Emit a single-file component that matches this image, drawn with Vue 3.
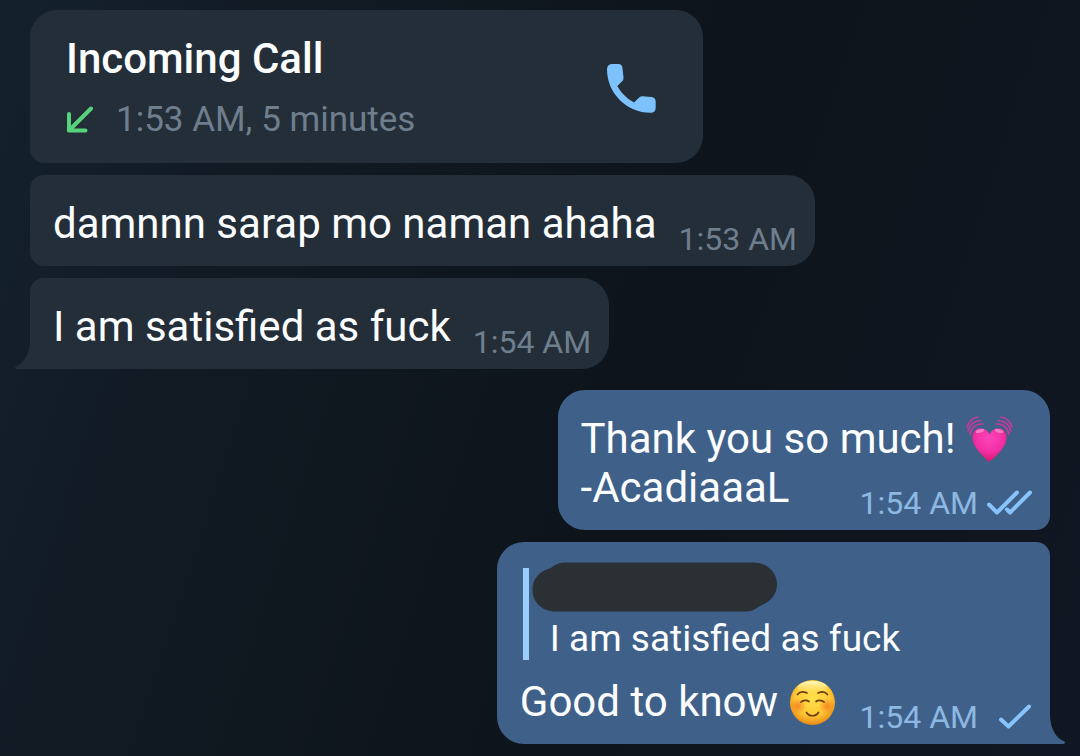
<script setup>
import { ref } from 'vue'

const call = ref({ title: 'Incoming Call', detail: '1:53 AM, 5 minutes' })
const incoming = ref([
  { text: 'damnnn sarap mo naman ahaha', time: '1:53 AM', last: false },
  { text: 'I am satisfied as fuck', time: '1:54 AM', last: true },
])
</script>

<template>
  <main class="chat">
    <article class="bubble in call">
      <div>
        <h2 class="call-title">{{ call.title }}</h2>
        <p class="call-detail">
          <svg class="arrow" viewBox="0 0 28 28" aria-hidden="true">
            <path d="M25 2.500 L3 24.500 M3 8V24.500H19.500" />
          </svg>
          <span>{{ call.detail }}</span>
        </p>
      </div>
      <button class="call-button" type="button" aria-label="Call back">
        <svg class="phone" viewBox="0 0 49 49" aria-hidden="true">
          <path d="M5.500 0 H11.500 Q15 0 15.400 3.500 L16.500 13.500 Q16.700 15.700 15.200 17.200 L10.300 22 C14.300 29 19.500 34.300 27 38.500 L32.200 33.400 Q33.700 32 35.800 32.200 L44.500 33 Q48.700 33.500 48.700 37.500 V43.500 Q48.700 48.800 43.500 48.800 C19.500 48.800 0 29 0 5.500 Q0 0 5.500 0Z" />
        </svg>
      </button>
    </article>

    <article
      v-for="message in incoming"
      :key="message.text"
      class="bubble in message"
      :class="{ last: message.last }"
    >
      <p class="text">{{ message.text }}</p>
      <div class="meta"><time>{{ message.time }}</time></div>
      <svg v-if="message.last" class="tail tail-left" viewBox="0 0 15 28" aria-hidden="true">
        <path d="M15 0 V28 H1 Q-1 26 1 25.200 C9 22 14.500 13 15 0Z" />
      </svg>
    </article>

    <article class="bubble out message stacked">
      <p class="text">
        Thank you so much!
        <svg class="emoji" viewBox="0 0 47 47" role="img" aria-label="beating heart">
          <defs>
            <radialGradient id="heart" cx="0.5" cy="0.3" r="0.8">
              <stop offset="0" stop-color="#fb45b8" />
              <stop offset="0.5" stop-color="#f32fa6" />
              <stop offset="1" stop-color="#d30b55" />
            </radialGradient>
          </defs>
          <path fill="url(#heart)" d="M23.500 46 C20 42.500 6.500 32 6.500 22 C6.500 15 10 12.500 14.500 12.500 C19 12.500 22 14.500 23.500 18.500 C25 14.500 28 12.500 32.500 12.500 C37 12.500 40.500 15 40.500 22 C40.500 32 27 42.500 23.500 46Z" />
          <ellipse cx="14" cy="15" rx="4.500" ry="1.700" fill="#ffadd9" opacity="0.6" transform="rotate(-15 14 15)" />
          <ellipse cx="33" cy="15" rx="4.500" ry="1.700" fill="#ffadd9" opacity="0.6" transform="rotate(15 33 15)" />
          <g fill="none" stroke="#c43a9c" stroke-width="1.700" stroke-linecap="round">
            <path d="M1 11 C3 5 7 1.500 12 1 M2 15 C3.500 9 8 5 14.500 4.500 M4 18.500 C5 12 9 8 16.500 8" />
            <path d="M46 11 C44 5 40 1.500 35 1 M45 15 C43.500 9 39 5 32.500 4.500 M43 18.500 C42 12 38 8 30.500 8" />
          </g>
        </svg><br />-AcadiaaaL
      </p>
      <div class="meta">
        <time>1:54 AM</time>
        <svg class="checks" viewBox="0 0 46 26" role="img" aria-label="Read">
          <path d="M3 14.500 L11 22.500 L31 2.500 M21 19.500 L24 22.500 L44 2.500" />
        </svg>
      </div>
    </article>

    <article class="bubble out message last">
      <blockquote class="quote">
        <svg class="redacted" viewBox="0 0 246 50" role="img" aria-label="Hidden name">
          <path d="M33 0.500 H221 C235 0.500 245 10 245 22 C245 33 238 40 229 43.500 C225 45 223 49.500 213 49.500 H23 C10 49.500 0.500 40 0.500 27.500 C0.500 17 7 10 16 7 C22 5 24 0.500 33 0.500Z" />
        </svg>
        <p>I am satisfied as fuck</p>
      </blockquote>
      <p class="text">
        Good to know
        <svg class="emoji" viewBox="0 0 47 47" role="img" aria-label="smiling face">
          <defs>
            <radialGradient id="face" cx="0.5" cy="0.4" r="0.6">
              <stop offset="0" stop-color="#ffe14d" />
              <stop offset="0.65" stop-color="#fdc935" />
              <stop offset="1" stop-color="#e98a15" />
            </radialGradient>
            <radialGradient id="cheek">
              <stop offset="0" stop-color="#f5691d" stop-opacity="0.7" />
              <stop offset="1" stop-color="#f5691d" stop-opacity="0" />
            </radialGradient>
            <linearGradient id="shine" x2="0" y2="1">
              <stop offset="0" stop-color="#fffbc5" />
              <stop offset="1" stop-color="#ffe76a" stop-opacity="0" />
            </linearGradient>
          </defs>
          <circle cx="23.500" cy="23.500" r="22.500" fill="url(#face)" />
          <ellipse cx="23.500" cy="9" rx="15" ry="7" fill="url(#shine)" />
          <circle cx="9" cy="27" r="8" fill="url(#cheek)" />
          <circle cx="38" cy="27" r="8" fill="url(#cheek)" />
          <g fill="none" stroke="#713b12" stroke-width="1.700" stroke-linecap="round">
            <path d="M8.500 15.500 C10.500 13 14.500 12.500 18 14 M29 14 C32.500 12.500 36.500 13 38.500 15.500" />
            <path d="M12 23 C14 20.800 18 20.800 20 22.500 M27 22.500 C29 20.800 33 20.800 35 23" />
            <path d="M17.500 33.500 C20 37.800 27 37.800 29.500 33.500" />
          </g>
        </svg>
      </p>
      <div class="meta">
        <time>1:54 AM</time>
        <svg class="checks" viewBox="0 0 46 26" role="img" aria-label="Sent">
          <path d="M15 15.500 L22.500 22.500 L43 2.500" />
        </svg>
      </div>
      <svg class="tail tail-right" viewBox="0 0 15 28" aria-hidden="true">
        <path d="M0 0 V28 H14 Q16 26 14 25.200 C6 22 0.500 13 0 0Z" />
      </svg>
    </article>
  </main>
</template>

<style>
html {
  min-height: 100%;
  background: linear-gradient(108deg, #14212c 0%, #111922 25%, #0d141b 58%, #111722 100%);
}
</style>

<style scoped>
.chat {
  display: flex;
  flex-direction: column;
  align-items: flex-start;
  gap: 12px;
  padding: 10px 30px 12px;
  font-family: Roboto, "Noto Sans", sans-serif;
  font-size: 42px;
  line-height: 49px;
  color: #fbfdff;
}

h2,
p,
blockquote {
  margin: 0;
}

.bubble {
  position: relative;
  box-sizing: border-box;
}

.in {
  background: #232e39;
  border-radius: 14px 27px 27px 14px;
  --meta: #6f7e8d;
  --fill: #232e39;
}

.out {
  align-self: flex-end;
  background: #3f6189;
  border-radius: 27px 27px 14px 27px;
  --meta: #8db8e2;
  --fill: #3f6189;
}

.call {
  display: flex;
  align-items: center;
  justify-content: space-between;
  width: 66%;
  padding: 24px 47px 23px 36px;
  border-top-left-radius: 27px;
}

.call-title {
  font-size: 42px;
  font-weight: 500;
}

.call-detail {
  display: flex;
  align-items: center;
  gap: 22px;
  margin-top: 16px;
  font-size: 35px;
  line-height: 41px;
  color: #6f7e8d;
}

.arrow {
  width: 28px;
  height: 28px;
  fill: none;
  stroke: #56d37b;
  stroke-width: 4;
  stroke-linecap: round;
  stroke-linejoin: round;
}

.call-button {
  display: flex;
  padding: 2px 0 0;
  border: 0;
  background: none;
  cursor: pointer;
}

.phone {
  width: 49px;
  height: 49px;
  fill: #7dc2fc;
}

.message {
  display: grid;
  grid-template-columns: auto auto;
  column-gap: 22px;
  padding: 24px 18px 8px 23px;
}

.text {
  padding-bottom: 10px;
}

.meta {
  display: flex;
  align-items: center;
  align-self: end;
  justify-self: end;
  gap: 8px;
  font-size: 32px;
  line-height: 38px;
  color: var(--meta);
}

.checks {
  width: 46px;
  height: 26px;
  fill: none;
  stroke: #87c3fd;
  stroke-width: 4;
  stroke-linecap: round;
  stroke-linejoin: round;
}

.emoji {
  width: 47px;
  height: 47px;
  vertical-align: -10px;
}

.stacked {
  grid-template-columns: auto;
}

.stacked .text,
.stacked .meta {
  grid-area: 1 / 1;
}

.stacked .text {
  padding-right: 19px;
}

.in.last {
  margin-bottom: 9px;
  border-bottom-left-radius: 0;
}

.out.last {
  column-gap: 24px;
  border-top-right-radius: 14px;
  border-bottom-right-radius: 0;
}

.tail {
  position: absolute;
  bottom: 0;
  width: 15px;
  height: 28px;
  fill: var(--fill);
}

.tail-left {
  right: 100%;
}

.tail-right {
  left: 100%;
}

.quote {
  position: relative;
  grid-column: 1 / -1;
  box-sizing: border-box;
  height: 92px;
  margin: 2px 0 17px 3px;
  padding: 49px 0 0 21px;
  border-left: 6px solid #9bcdff;
  font-size: 37px;
  line-height: 43px;
}

.redacted {
  position: absolute;
  top: -6px;
  left: 3px;
  width: 246px;
  height: 50px;
  fill: #2b3034;
}
</style>
